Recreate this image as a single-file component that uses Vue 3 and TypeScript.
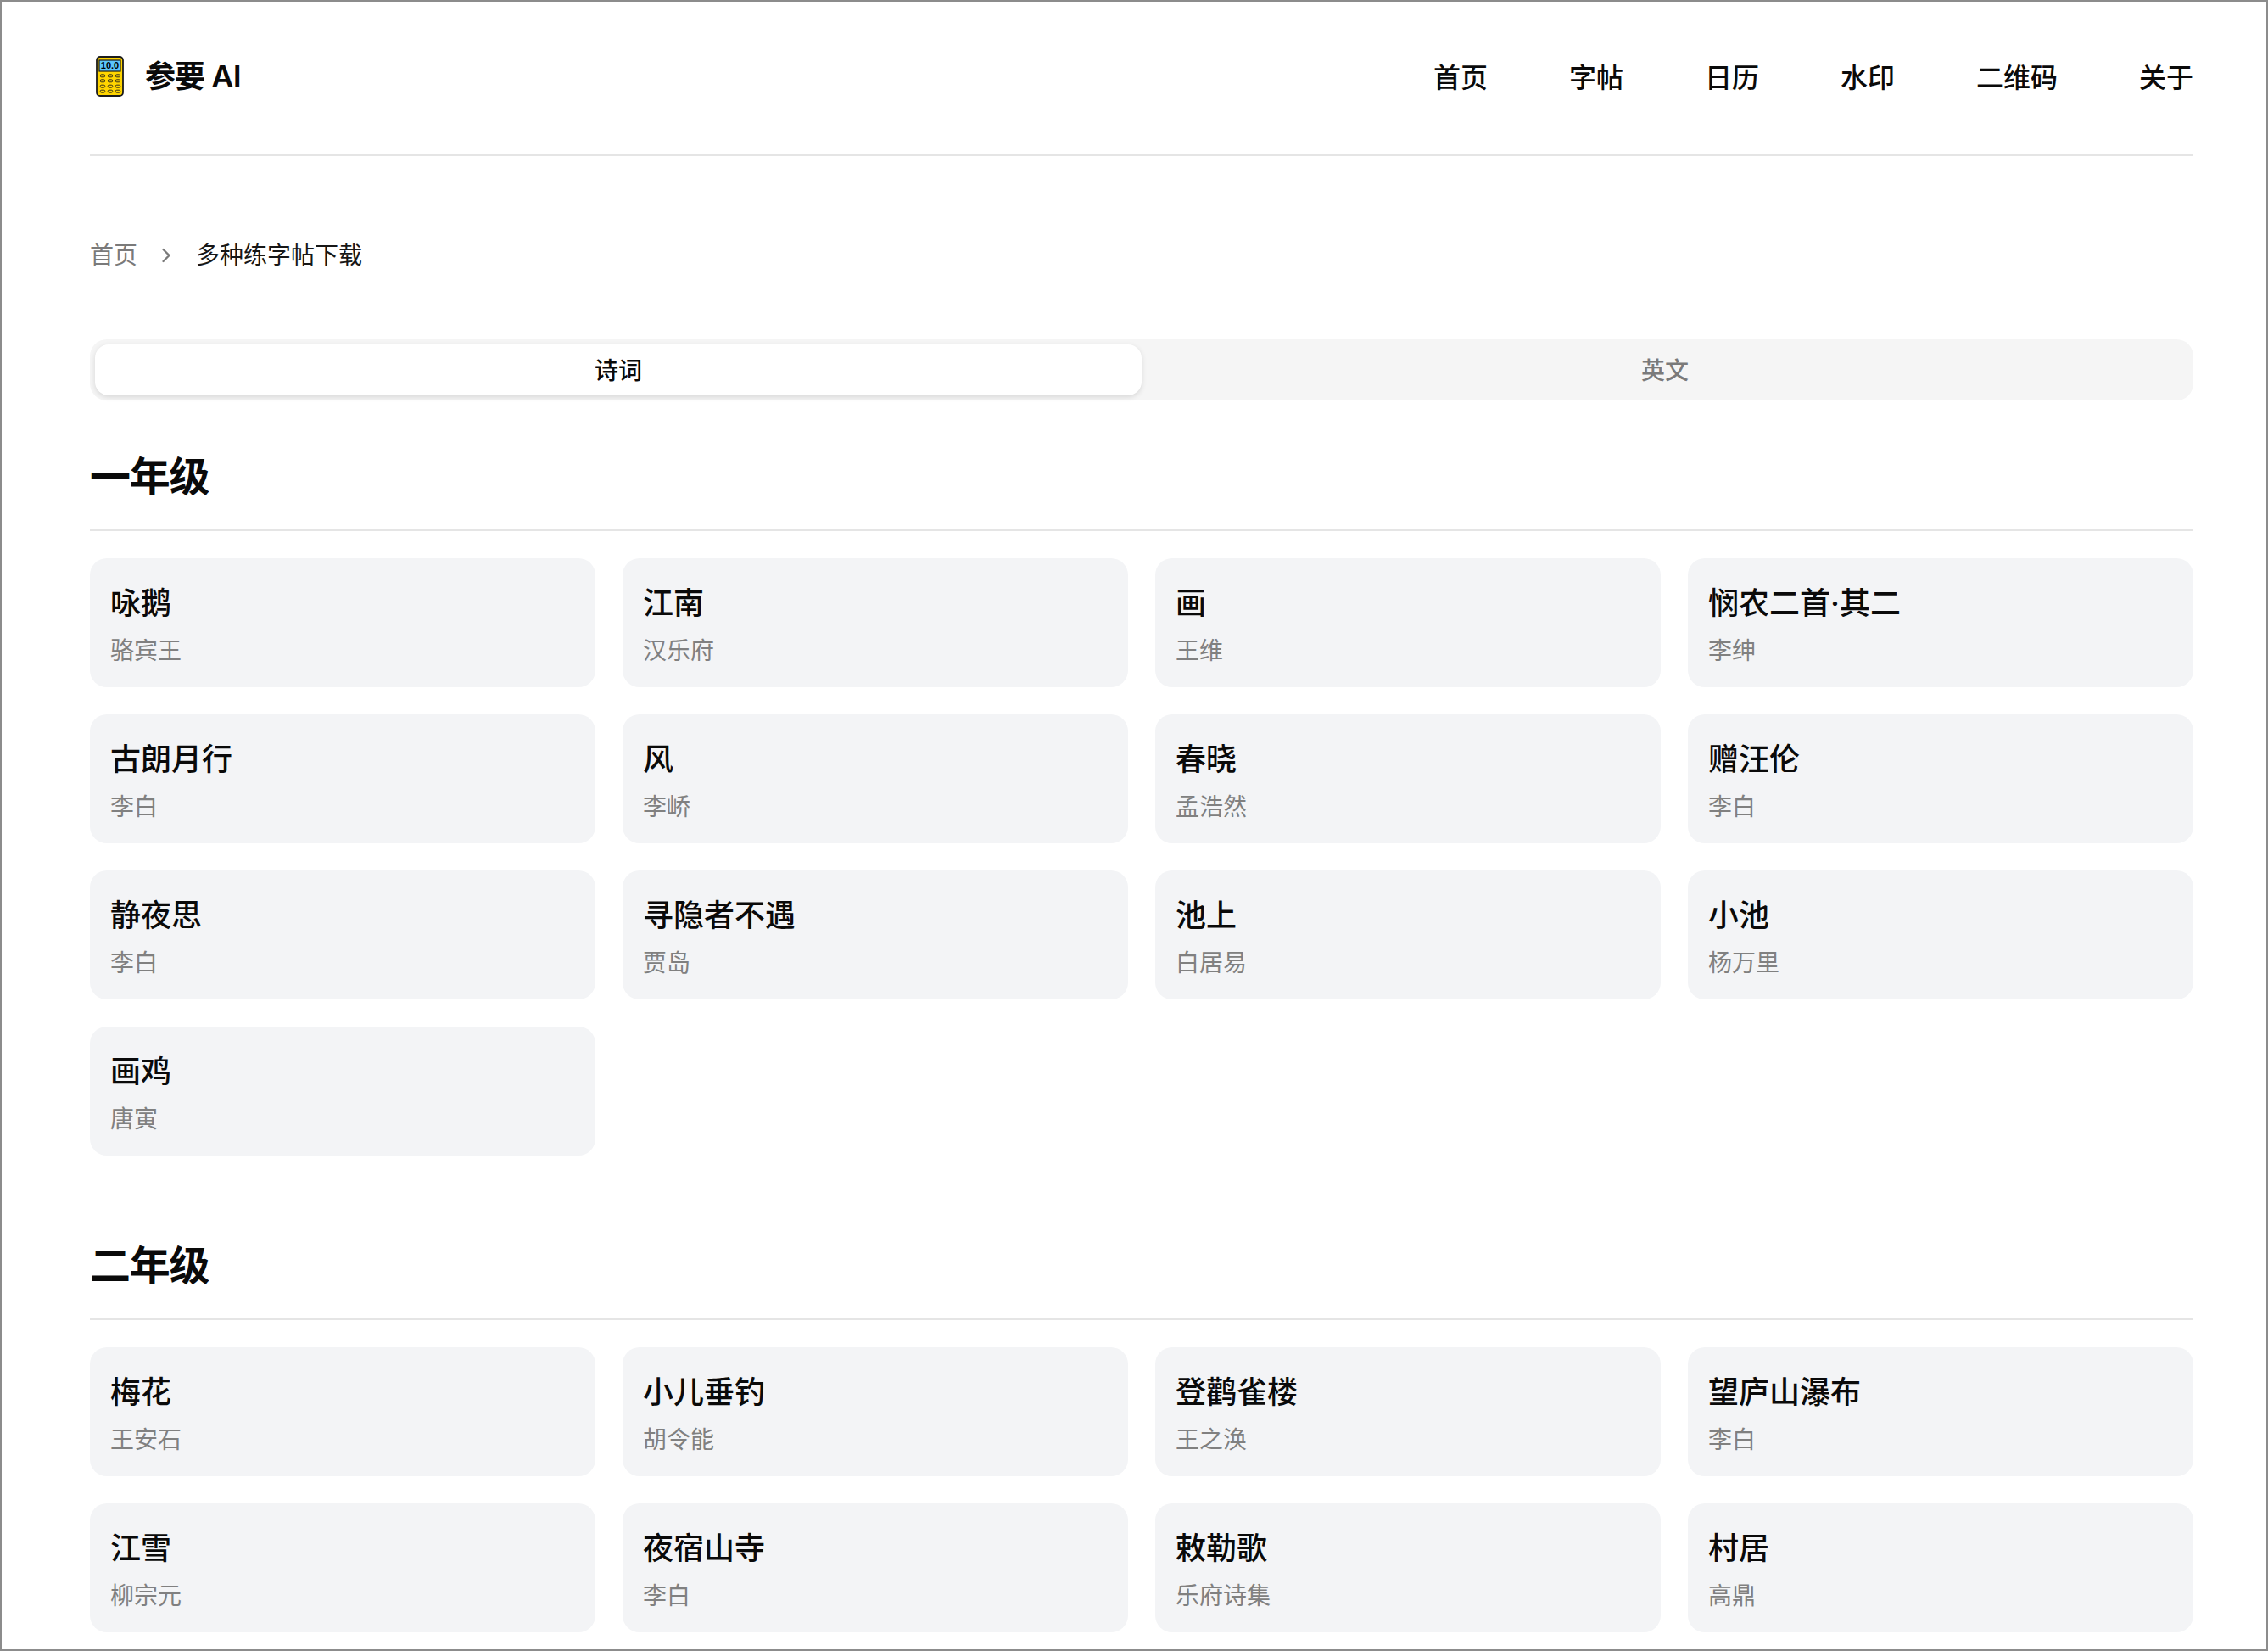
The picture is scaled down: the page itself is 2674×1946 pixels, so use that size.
<script setup lang="ts">
interface Poem { title: string; author: string }
interface Grade { name: string; poems: Poem[] }

const navItems: string[] = ['首页', '字帖', '日历', '水印', '二维码', '关于']

const grades: Grade[] = [
  {
    name: '一年级',
    poems: [
      { title: '咏鹅', author: '骆宾王' },
      { title: '江南', author: '汉乐府' },
      { title: '画', author: '王维' },
      { title: '悯农二首·其二', author: '李绅' },
      { title: '古朗月行', author: '李白' },
      { title: '风', author: '李峤' },
      { title: '春晓', author: '孟浩然' },
      { title: '赠汪伦', author: '李白' },
      { title: '静夜思', author: '李白' },
      { title: '寻隐者不遇', author: '贾岛' },
      { title: '池上', author: '白居易' },
      { title: '小池', author: '杨万里' },
      { title: '画鸡', author: '唐寅' },
    ],
  },
  {
    name: '二年级',
    poems: [
      { title: '梅花', author: '王安石' },
      { title: '小儿垂钓', author: '胡令能' },
      { title: '登鹳雀楼', author: '王之涣' },
      { title: '望庐山瀑布', author: '李白' },
      { title: '江雪', author: '柳宗元' },
      { title: '夜宿山寺', author: '李白' },
      { title: '敕勒歌', author: '乐府诗集' },
      { title: '村居', author: '高鼎' },
    ],
  },
]

const keyCols: number[] = [8, 17, 26]
const keyRows: number[] = [23.3, 29.3, 35.7, 41.7]
</script>

<template>
  <div class="frame">
    <header class="header">
      <div class="brand">
        <svg class="logo" viewBox="0 0 33 48" width="33" height="48" aria-hidden="true">
          <rect x="1" y="1" width="31" height="46" rx="4" fill="#ffd500" stroke="#1c1c1c" stroke-width="1.8" />
          <rect x="4" y="5" width="25" height="13" fill="#5cc4fa" stroke="#1c1c1c" stroke-width="1.2" />
          <text x="16.5" y="15.4" text-anchor="middle" class="logo-text">10.0</text>
          <template v-for="y in keyRows" :key="y">
            <rect
              v-for="x in keyCols"
              :key="x"
              :x="x - 2.8"
              :y="y - 1.5"
              width="5.6"
              height="3"
              rx="1.5"
              fill="#ffd500"
              stroke="#1c1c1c"
              stroke-width="0.9"
            />
          </template>
        </svg>
        <span class="brand-name">参要 AI</span>
      </div>
      <nav class="nav">
        <a v-for="item in navItems" :key="item" class="nav-link">{{ item }}</a>
      </nav>
    </header>

    <div class="crumbs">
      <span class="crumb-link">首页</span>
      <svg class="chevron" viewBox="0 0 24 24" width="28" height="28" fill="none" stroke="currentColor" stroke-width="2" stroke-linecap="round" stroke-linejoin="round" aria-hidden="true">
        <path d="m9 18 6-6-6-6" />
      </svg>
      <span class="crumb-current">多种练字帖下载</span>
    </div>

    <div class="tabs">
      <div class="tab active">诗词</div>
      <div class="tab">英文</div>
    </div>

    <section v-for="grade in grades" :key="grade.name" class="grade">
      <h2 class="grade-title">{{ grade.name }}</h2>
      <div class="grid">
        <article v-for="poem in grade.poems" :key="poem.title" class="card">
          <div class="card-title">{{ poem.title }}</div>
          <div class="card-author">{{ poem.author }}</div>
        </article>
      </div>
    </section>
  </div>
</template>

<style scoped>
.frame {
  box-sizing: border-box;
  height: 100vh;
  overflow: hidden;
  border: 2px solid #8c8c8c;
  padding: 0 86px 0 104px;
  background: #ffffff;
  color: #0a0a0a;
  font-family: Inter, "Noto Sans CJK SC", sans-serif;
}
.header {
  box-sizing: border-box;
  height: 182px;
  display: flex;
  align-items: center;
  justify-content: space-between;
  border-bottom: 2px solid #e5e5e5;
}
.brand {
  display: flex;
  align-items: center;
  gap: 25px;
  padding-left: 7px;
  margin-bottom: 4px;
}
.logo {
  display: block;
  flex: none;
}
.logo-text {
  font-family: "Liberation Sans", sans-serif;
  font-size: 11px;
  font-weight: 700;
  fill: #000000;
}
.brand-name {
  font-size: 36px;
  line-height: 48px;
  font-weight: 600;
  letter-spacing: -0.025em;
}
.nav {
  display: flex;
  gap: 96px;
}
.nav-link {
  font-size: 32px;
  line-height: 44px;
  font-weight: 500;
}
.crumbs {
  display: flex;
  align-items: center;
  gap: 20px;
  margin-top: 97px;
  font-size: 28px;
  line-height: 40px;
}
.crumb-link {
  color: #7a7a7a;
}
.chevron {
  color: #7a7a7a;
}
.crumb-current {
  color: #171717;
  margin-left: 1px;
}
.tabs {
  box-sizing: border-box;
  height: 72px;
  margin-top: 79px;
  padding: 6px;
  display: grid;
  grid-template-columns: 1fr 1fr;
  background: #f5f5f5;
  border-radius: 20px;
}
.tab {
  box-sizing: border-box;
  display: flex;
  align-items: center;
  justify-content: center;
  padding-bottom: 2px;
  font-size: 28px;
  font-weight: 500;
  color: #7a7a7a;
  border-radius: 16px;
}
.tab.active {
  background: #ffffff;
  color: #0a0a0a;
  box-shadow: 0 2px 6px rgba(0, 0, 0, 0.12);
}
.grade {
  margin-top: 56px;
}
.grade + .grade {
  margin-top: 96px;
}
.grade-title {
  margin: 0;
  padding: 2px 0 30px;
  font-size: 48px;
  line-height: 64px;
  font-weight: 600;
  letter-spacing: -0.025em;
  border-bottom: 2px solid #e5e5e5;
}
.grid {
  margin-top: 32px;
  display: grid;
  grid-template-columns: repeat(4, 1fr);
  gap: 32px;
}
.card {
  box-sizing: border-box;
  height: 152px;
  padding: 25px 24px 23px;
  background: #f3f4f6;
  border-radius: 20px;
}
.card-title {
  font-size: 36px;
  line-height: 56px;
  font-weight: 500;
}
.card-author {
  margin-top: 8px;
  font-size: 28px;
  line-height: 40px;
  color: #808080;
}
</style>
